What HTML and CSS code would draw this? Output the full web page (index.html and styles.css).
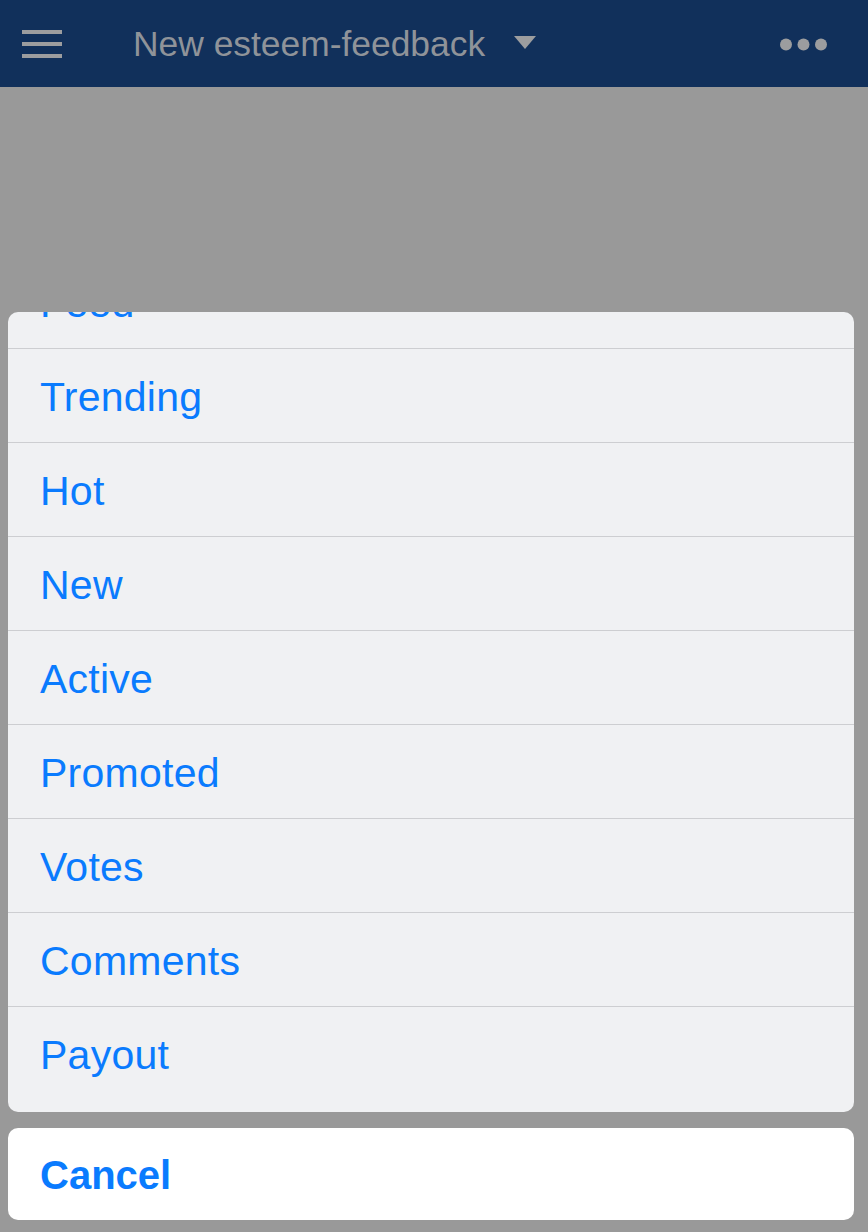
FILE: index.html
```html
<!DOCTYPE html>
<html>
<head>
<meta charset="utf-8">
<link rel="stylesheet" href="styles.css">
</head>
<body>
<header class="topbar">
  <svg class="menu-icon" width="40" height="28" viewBox="0 0 40 28"><rect x="0" y="0" width="40" height="4" fill="#9c9d9f"/><rect x="0" y="12" width="40" height="4" fill="#9c9d9f"/><rect x="0" y="24" width="40" height="4" fill="#9c9d9f"/></svg>
  <div class="title">New esteem-feedback</div>
  <svg class="caret" width="22" height="13" viewBox="0 0 22 13"><polygon points="0,0 22,0 11,13" fill="#9c9d9f"/></svg>
  <svg class="more" width="48" height="13" viewBox="0 0 48 13"><circle cx="6" cy="6.5" r="6" fill="#9c9d9f"/><circle cx="23.5" cy="6.5" r="6" fill="#9c9d9f"/><circle cx="41" cy="6.5" r="6" fill="#9c9d9f"/></svg>
</header>
<main class="overlay">
  <div class="sheet">
    <ul class="options">
      <li>Feed</li>
      <li>Trending</li>
      <li>Hot</li>
      <li>New</li>
      <li>Active</li>
      <li>Promoted</li>
      <li>Votes</li>
      <li>Comments</li>
      <li class="last">Payout</li>
    </ul>
  </div>
  <div class="cancel">Cancel</div>
</main>
</body>
</html>
```
FILE: styles.css
```css
html, body {
  margin: 0;
  padding: 0;
  background: #999999;
  font-family: "Liberation Sans", Arial, sans-serif;
}
.topbar {
  height: 87px;
  background: #11305b;
  display: flex;
  align-items: center;
  position: relative;
}
.menu-icon {
  margin-left: 22px;
}
.title {
  margin-left: 71px;
  font-size: 35.4px;
  color: #8f9399;
  line-height: 1;
  margin-top: 2px;
}
.caret {
  margin-left: 29px;
  margin-top: -2px;
}
.more {
  margin-left: auto;
  margin-right: 40px;
  margin-top: 2px;
}
.overlay {
  display: flex;
  flex-direction: column;
  padding: 225px 14px 0 8px;
}
.sheet {
  height: 800px;
  background: #f0f1f3;
  border-radius: 10px;
  overflow: hidden;
}
.options {
  list-style: none;
  margin: -57px 0 0 0;
  padding: 0;
}
.options li {
  height: 90px;
  padding-top: 3px;
  border-bottom: 1px solid #cdced1;
  display: flex;
  align-items: center;
  padding-left: 32px;
  font-size: 41px;
  letter-spacing: 0.25px;
  color: #0a7bfe;
}
.options li.last {
  border-bottom: none;
}
.cancel {
  margin-top: 16px;
  height: 90px;
  padding-top: 2px;
  background: #ffffff;
  border-radius: 10px;
  display: flex;
  align-items: center;
  padding-left: 32px;
  font-size: 40px;
  font-weight: bold;
  color: #0a7bfe;
}
```
